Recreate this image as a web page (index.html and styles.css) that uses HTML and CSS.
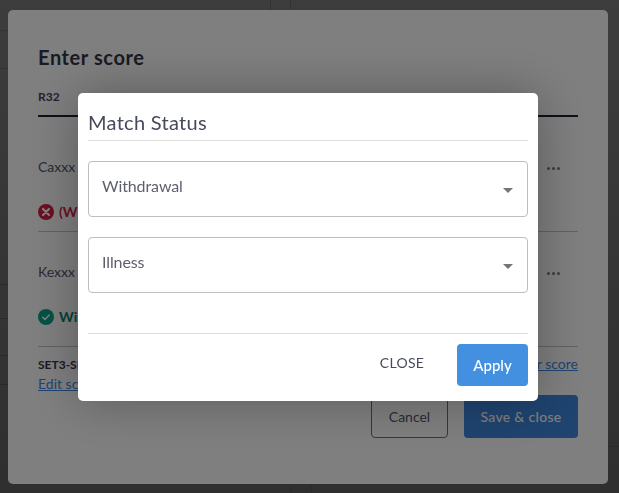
FILE: index.html
```html
<!DOCTYPE html>
<html lang="en">
<head>
    <meta charset="UTF-8">
    <meta name="viewport" content="width=device-width, initial-scale=1.0">
    <title>Enter score</title>
    <link rel="stylesheet" href="styles.css">
</head>
<body>

<!-- Score card behind the dialog -->
<div class="card">
    <h1 class="card-title">Enter score</h1>
    <div class="tab-row"><span class="tab-label">R32</span></div>

    <div class="player">
        <div class="player-line">
            <span class="player-name">Caxxx</span>
            <span class="more"><i></i><i></i><i></i></span>
        </div>
        <div class="status status-out">
            <svg class="status-icon" viewBox="0 0 16 16">
                <circle cx="8" cy="8" r="8" fill="#d61f45"/>
                <path d="M5 5l6 6M11 5l-6 6" stroke="#fff" stroke-width="2.2" stroke-linecap="round"/>
            </svg>
            (Withdrawal)
        </div>
    </div>

    <div class="player">
        <div class="player-line">
            <span class="player-name">Kexxx</span>
            <span class="more"><i></i><i></i><i></i></span>
        </div>
        <div class="status status-win">
            <svg class="status-icon" viewBox="0 0 16 16">
                <circle cx="8" cy="8" r="8" fill="#0aa58a"/>
                <path d="M4.8 8.3l2.2 2.1 4.2-4.4" stroke="#fff" stroke-width="1.5" fill="none" stroke-linecap="round" stroke-linejoin="round"/>
            </svg>
            Winner
        </div>
    </div>

    <div class="score-row">
        <div>
            <div class="score-text">SET3-SET1</div>
            <a class="link">Edit score</a>
        </div>
        <a class="link link-clear">Clear score</a>
    </div>

    <div class="card-actions">
        <button class="btn-cancel">Cancel</button>
        <button class="btn-save">Save &amp; close</button>
    </div>
</div>

<!-- Match status dialog -->
<div class="overlay">
    <div class="modal">
        <h2 class="modal-title">Match Status</h2>
        <div class="modal-body">
            <div class="select">Withdrawal<span class="caret"></span></div>
            <div class="select">Illness<span class="caret"></span></div>
        </div>
        <div class="modal-footer">
            <button class="btn-close">CLOSE</button>
            <button class="btn-apply">Apply</button>
        </div>
    </div>
</div>

</body>
</html>
```

FILE: styles.css
```css
* {
    box-sizing: border-box;
}
html, body {
    height: 100%;
}
body {
    margin: 0;
    padding: 10px 11px 9px 8px;
    overflow: hidden;
    font-family: Lato, "Open Sans", sans-serif;
    /* faint table lines of the page behind the card */
    background:
        linear-gradient(#666, #666) 270px 0 / 1px 10px no-repeat,
        linear-gradient(#666, #666) 290px 0 / 1px 10px no-repeat,
        linear-gradient(#555, #555) 290px 484px / 1px 9px no-repeat,
        linear-gradient(#555, #555) 311px 484px / 1px 9px no-repeat,
        linear-gradient(#666, #666) 0 30px / 8px 1px no-repeat,
        linear-gradient(#666, #666) 0 68px / 8px 1px no-repeat,
        linear-gradient(#555, #555) 0 284px / 8px 1px no-repeat,
        linear-gradient(#555, #555) 0 318px / 8px 1px no-repeat,
        linear-gradient(#555, #555) 0 355px / 8px 1px no-repeat,
        linear-gradient(#555, #555) 0 384px / 8px 1px no-repeat,
        linear-gradient(#555, #555) 608px 446px / 11px 1px no-repeat,
        linear-gradient(#7a7a7a, #5e5e5e);
}
.card {
    height: 474px;
    padding: 34px 30px 0;
    background: #fff;
    border-radius: 5px;
    color: #33354a;
}
.card-title {
    margin: 0;
    font-size: 20px;
    line-height: 26px;
    font-weight: 700;
    letter-spacing: 0.6px;
    color: #33364a;
}
.tab-row {
    margin-top: 19px;
    height: 28px;
    border-bottom: 2px solid #1d2035;
}
.tab-label {
    font-size: 12px;
    line-height: 16px;
    font-weight: 700;
    display: block;
    color: #44465a;
}
.player {
    padding-top: 40px;
    height: 115px;
    border-bottom: 1px solid #c4c4c4;
}
.player + .player {
    padding-top: 30px;
}
.player-line {
    display: flex;
    justify-content: space-between;
    align-items: center;
    padding-right: 18px;
    font-size: 14px;
    line-height: 20px;
    color: #55566a;
}
.more {
    display: flex;
    gap: 2px;
    margin-top: 3px;
}
.more i {
    width: 3px;
    height: 3px;
    border-radius: 50%;
    background: #7a7a84;
}
.status {
    display: flex;
    align-items: center;
    gap: 5px;
    margin-top: 26px;
    font-size: 14px;
    font-weight: 700;
    line-height: 18px;
}
.status-icon {
    width: 16px;
    height: 16px;
}
.status-out {
    color: #d61f45;
}
.status-win {
    color: #05826d;
}
.score-row {
    display: flex;
    justify-content: space-between;
    align-items: flex-start;
    margin-top: 9px;
    font-size: 12px;
    line-height: 18px;
}
.score-text {
    font-weight: 700;
}
.link {
    display: block;
    font-size: 14px;
    line-height: 19px;
    color: #3e88e0;
    text-decoration: underline;
}
.link-clear {
    margin-top: -2px;
}
.card-actions {
    display: flex;
    justify-content: flex-end;
    gap: 16px;
    margin-top: 2px;
}
.card-actions button {
    height: 43px;
    border-radius: 4px;
    font-family: inherit;
    font-size: 14px;
}
.btn-cancel {
    width: 77px;
    background: #fff;
    border: 1px solid #6a6c7e;
    color: #55566a;
}
.btn-save {
    width: 114px;
    background: #3e88e0;
    border: 0;
    color: #fff;
    font-weight: 500;
    letter-spacing: 0.3px;
}
.overlay {
    position: fixed;
    top: 0;
    left: 0;
    right: 0;
    bottom: 0;
    background: rgba(0, 0, 0, 0.5);
}
.modal {
    position: absolute;
    left: 78px;
    top: 93px;
    width: 460px;
    height: 308px;
    padding: 0 10px;
    background: #fff;
    border-radius: 5px;
    box-shadow: 0 0 50px rgba(0, 0, 0, 0.3);
    color: #464a5c;
}
.modal-title {
    margin: 0;
    height: 48px;
    padding-top: 15px;
    font-size: 20px;
    line-height: 28px;
    font-weight: 400;
    letter-spacing: 0.3px;
    border-bottom: 1px solid #dedede;
}
.modal-body {
    height: 193px;
    padding-top: 20px;
    border-bottom: 1px solid #dedede;
}
.select {
    position: relative;
    height: 56px;
    margin-bottom: 20px;
    padding: 14px 13px 0;
    border: 1px solid #bdbdbd;
    border-radius: 4px;
    font-size: 16px;
    line-height: 20px;
    letter-spacing: -0.1px;
    color: #5d5f6b;
}
.caret {
    position: absolute;
    right: 14px;
    top: 26px;
    border-left: 5px solid transparent;
    border-right: 5px solid transparent;
    border-top: 5px solid #757575;
}
.modal-footer {
    display: flex;
    justify-content: flex-end;
    align-items: flex-start;
    padding-top: 10px;
}
.btn-close {
    width: 90px;
    height: 36px;
    margin-right: 10px;
    padding: 0;
    background: none;
    border: 0;
    font-family: inherit;
    font-size: 14px;
    letter-spacing: 0.3px;
    color: #464a5c;
}
.btn-apply {
    width: 71px;
    height: 42px;
    padding: 0;
    background: #4390e0;
    border: 0;
    border-radius: 4px;
    font-family: inherit;
    font-size: 15px;
    font-weight: 500;
    color: #fff;
}
```
